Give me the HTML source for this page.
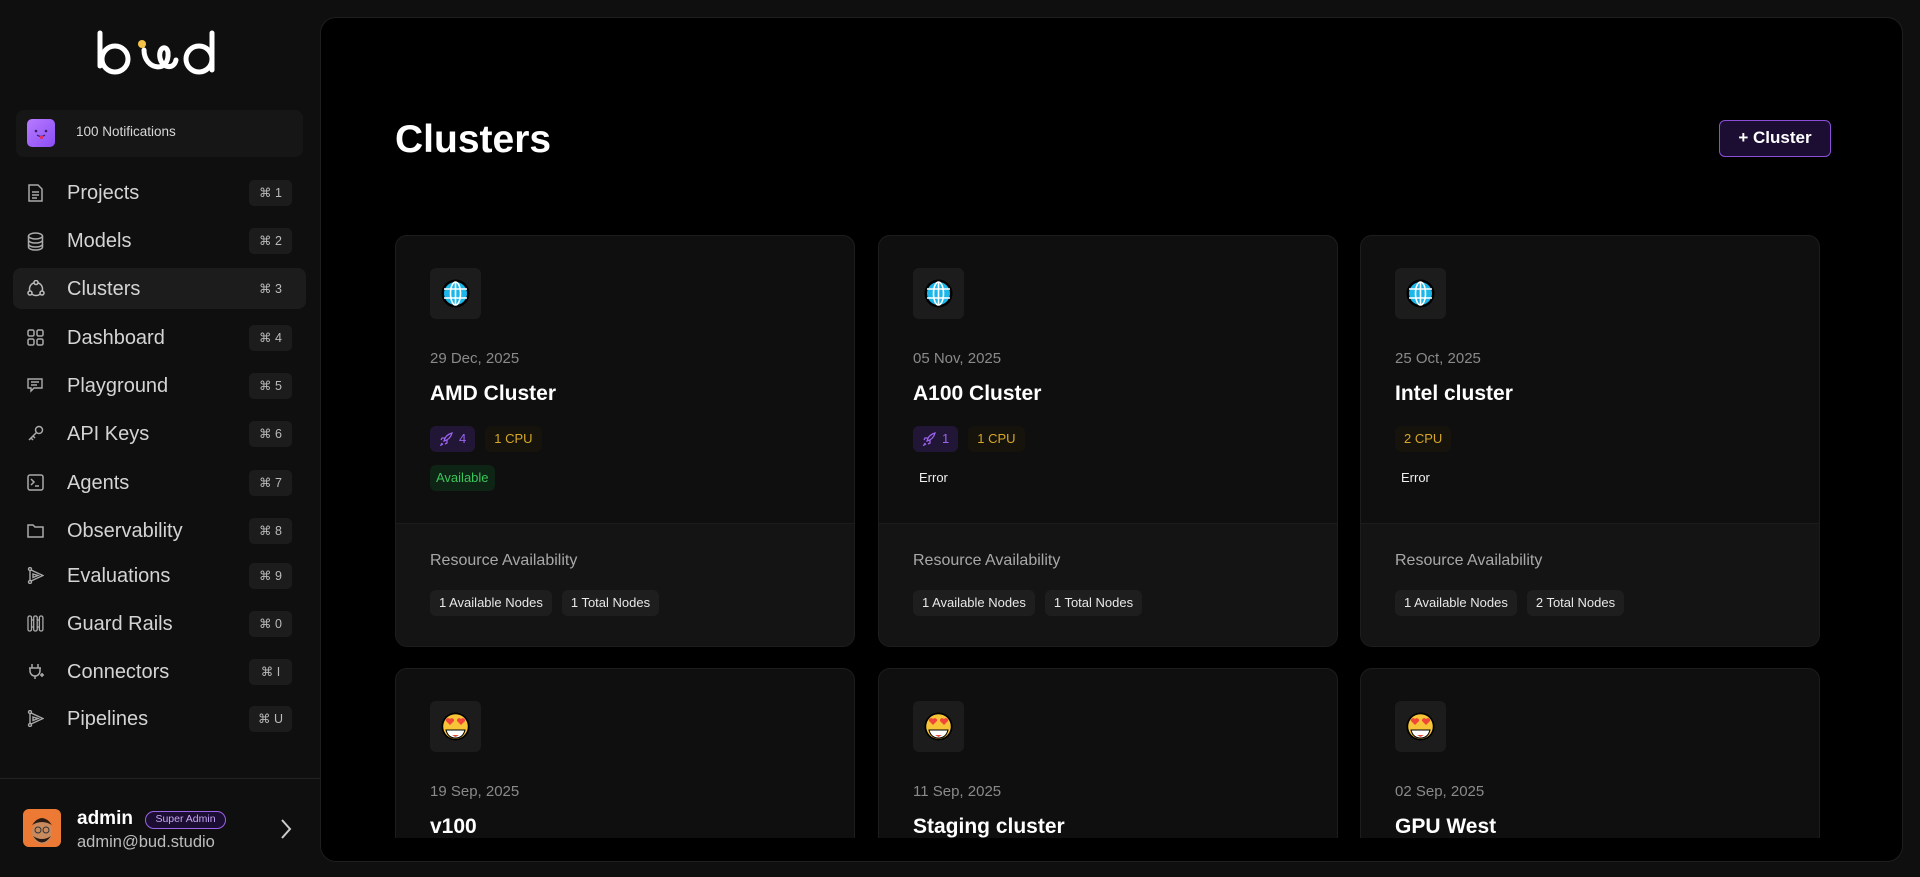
<!DOCTYPE html>
<html style="overflow:hidden"><head><meta charset="utf-8"><style>
*{box-sizing:border-box;margin:0;padding:0}
html,body{width:1920px;height:877px;overflow:hidden}
body{background:#0f0f0f;font-family:"Liberation Sans",sans-serif;color:#e8e8e8;position:relative}
.side{position:absolute;left:0;top:0;width:320px;height:877px;background:#0f0f0f}
.logo{position:absolute;left:96px;top:30px}
.notif{position:absolute;left:16px;top:110px;width:287px;height:47px;background:#161616;border-radius:8px}
.notif .ic{position:absolute;left:11px;top:9px;width:28px;height:28px;border-radius:5px;background:linear-gradient(135deg,#b67bff,#8c4df5)}
.notif span{position:absolute;left:60px;top:14px;font-size:13.5px;color:#d8d8d8}
.nav{position:absolute;left:13px;width:293px;height:41px;border-radius:8px}
.nav.act{background:#1c1c1c}
.nav svg{position:absolute;left:14px;top:12px}
.nav .t{position:absolute;left:54px;top:10px;font-size:20px;color:#d4d4d4}
.nav .k{position:absolute;left:236px;top:8px;width:43px;height:26px;background:#1c1c1c;border-radius:5px;font-size:12.5px;color:#bbb;text-align:center;line-height:26px}
.nav.act .k{background:none}
.sdiv{position:absolute;left:0;top:778px;width:320px;height:1px;background:#222}
.main{position:absolute;left:320px;top:17px;width:1583px;height:845px;background:#000;border:1px solid #1e1e1e;border-radius:16px;overflow:hidden}
.clip{position:absolute;left:0;top:0;width:1583px;height:820px;overflow:hidden}
h1{position:absolute;left:74px;top:100px;font-size:39px;font-weight:bold;color:#fff}
.btn{position:absolute;left:1398px;top:102px;width:112px;height:37px;border:1.5px solid #8a4fd6;background:#1c0d33;border-radius:6px;color:#fff;font-size:17px;font-weight:bold;text-align:center;line-height:34px}
.card{position:absolute;width:460px;height:412px;background:#0f0f0f;border:1px solid #1d1d1d;border-radius:12px;overflow:hidden}
.card .ib{position:absolute;left:34px;top:32px;width:51px;height:51px;background:#1c1c1c;border-radius:6px}
.card .ib svg{position:absolute;left:10px;top:10px}
.card .d{position:absolute;left:34px;top:114px;font-size:15px;color:#8a8a8a}
.card .n{position:absolute;left:34px;top:146px;font-size:21px;font-weight:bold;color:#fff}
.tags{position:absolute;left:34px;top:190px;display:flex;gap:10px}
.tag{height:26px;border-radius:6px;padding:0 9px;font-size:13px;line-height:26px}
.g{background:#221636;color:#9b63f0;display:flex;align-items:center;gap:6px}
.c{background:#16130c;color:#d6a729}
.st{position:absolute;left:34px;top:229px;height:26px;border-radius:6px;padding:0 6px;font-size:13px;line-height:26px}
.av{background:#0e2414;color:#3bc45a}
.er{color:#f0f0f0;padding:0 6px}
.bot{position:absolute;left:0;top:287px;width:460px;height:125px;background:#141414;border-top:1px solid #1c1c1c}
.bot .r{position:absolute;left:34px;top:28px;font-size:16px;color:#a8a8a8}
.bot .ch{position:absolute;left:34px;top:66px;display:flex;gap:10px}
.bot .ch div{height:26px;padding:0 9px;background:#1e1e1e;border-radius:6px;font-size:13px;line-height:26px;color:#e8e8e8}
</style></head><body>
<div class="side">
<svg class="logo" width="128" height="46" viewBox="0 0 128 46"><g fill="none" stroke="#fff" stroke-width="5" stroke-linecap="round"><path d="M4 3V36"/><circle cx="19" cy="29" r="13"/><path d="M48 20C48 40 74 44 72 22C70 14 62 18 64 28C66 38 78 40 80 30"/><circle cx="103" cy="29" r="13"/><path d="M116 3V40"/></g><circle cx="46" cy="14" r="4" fill="#f2c146"/></svg>
<div class="notif"><div class="ic"><svg width="28" height="28"><circle cx="9" cy="12" r="1.3" fill="#3b1f66"/><circle cx="19" cy="12" r="1.3" fill="#3b1f66"/><path d="M10 16Q14 19 18 16" stroke="#3b1f66" fill="none" stroke-width="1.2"/><path d="M13 17h3v3h-3z" fill="#e0306b"/></svg></div><span>100 Notifications</span></div>

<div class="nav" style="top:172px"><svg width="17" height="18" fill="none" stroke="#aaa" stroke-width="1.5"><path d="M2 1h9l4 4v12H2z"/><path d="M5 8h7M5 11h7M5 14h5"/></svg><span class="t">Projects</span><span class="k">⌘ 1</span></div>
<div class="nav" style="top:220px"><svg width="17" height="19" fill="none" stroke="#aaa" stroke-width="1.5"><ellipse cx="8.5" cy="4" rx="7" ry="3"/><path d="M1.5 4v11c0 1.7 3 3 7 3s7-1.3 7-3V4M1.5 8c0 1.7 3 3 7 3s7-1.3 7-3M1.5 12c0 1.7 3 3 7 3s7-1.3 7-3"/></svg><span class="t">Models</span><span class="k">⌘ 2</span></div>
<div class="nav act" style="top:268px"><svg width="18" height="18" fill="none" stroke="#bbb" stroke-width="1.5"><circle cx="9" cy="9" r="6.5"/><circle cx="9" cy="2.5" r="2" fill="#1c1c1c"/><circle cx="3" cy="13" r="2" fill="#1c1c1c"/><circle cx="15" cy="13" r="2" fill="#1c1c1c"/></svg><span class="t">Clusters</span><span class="k">⌘ 3</span></div>
<div class="nav" style="top:317px"><svg width="17" height="17" fill="none" stroke="#aaa" stroke-width="1.5"><rect x="1" y="1" width="6" height="6" rx="1.5"/><rect x="10" y="1" width="6" height="6" rx="1.5"/><rect x="1" y="10" width="6" height="6" rx="1.5"/><rect x="10" y="10" width="6" height="6" rx="1.5"/></svg><span class="t">Dashboard</span><span class="k">⌘ 4</span></div>
<div class="nav" style="top:365px"><svg width="17" height="17" fill="none" stroke="#aaa" stroke-width="1.4"><path d="M1 2h14v9H7l-3 3v-3H1z"/><path d="M4 5h8M4 8h6"/></svg><span class="t">Playground</span><span class="k">⌘ 5</span></div>
<div class="nav" style="top:413px"><svg width="17" height="17" fill="none" stroke="#aaa" stroke-width="1.5"><circle cx="12" cy="5" r="3.5"/><path d="M9.5 7.5L2 15M4 13l2 2M6 11l2 2"/></svg><span class="t">API Keys</span><span class="k">⌘ 6</span></div>
<div class="nav" style="top:462px"><svg width="17" height="17" fill="none" stroke="#aaa" stroke-width="1.5"><rect x="1" y="1" width="15" height="15" rx="2"/><path d="M4 5l3 3-3 3M8 12h4"/></svg><span class="t">Agents</span><span class="k">⌘ 7</span></div>
<div class="nav" style="top:510px"><svg width="17" height="17" fill="none" stroke="#aaa" stroke-width="1.5"><path d="M1 3h5l2 2h8v10H1z"/></svg><span class="t">Observability</span><span class="k">⌘ 8</span></div>
<div class="nav" style="top:555px"><svg width="17" height="17" fill="none" stroke="#aaa" stroke-width="1.4"><circle cx="3" cy="2" r="1.5"/><circle cx="3" cy="15" r="1.5"/><path d="M3 3.5v10M4 3l12 5.5L4 14M6 7l5 1.5-5 2z"/></svg><span class="t">Evaluations</span><span class="k">⌘ 9</span></div>
<div class="nav" style="top:603px"><svg width="17" height="17" fill="none" stroke="#aaa" stroke-width="1.3"><rect x="1" y="1" width="3.5" height="15" rx="1.5"/><rect x="6.7" y="1" width="3.5" height="15" rx="1.5"/><rect x="12.4" y="1" width="3.5" height="15" rx="1.5"/><path d="M4.5 5h2M4.5 12h2M10.2 5h2M10.2 12h2"/></svg><span class="t">Guard Rails</span><span class="k">⌘ 0</span></div>
<div class="nav" style="top:651px"><svg width="17" height="17" fill="none" stroke="#aaa" stroke-width="1.5"><path d="M5 1v4M11 1v4M2 5h12M3 5v3a5 5 0 0 0 10 0V5M8 13v3M13 12h4M15 10v4"/></svg><span class="t">Connectors</span><span class="k">⌘ I</span></div>
<div class="nav" style="top:698px"><svg width="17" height="17" fill="none" stroke="#aaa" stroke-width="1.4"><circle cx="3" cy="2" r="1.5"/><circle cx="3" cy="15" r="1.5"/><path d="M3 3.5v10M4 3l12 5.5L4 14M6 7l5 1.5-5 2z"/></svg><span class="t">Pipelines</span><span class="k">⌘ U</span></div>

<div class="sdiv"></div>
<div style="position:absolute;left:23px;top:809px;width:38px;height:38px;border-radius:6px;background:#ec7a34;overflow:hidden"><svg width="38" height="38"><ellipse cx="19" cy="23" rx="10" ry="12" fill="#c98a5e"/><path d="M9 16Q19 2 29 16Q19 10 9 16" fill="#2a1a12"/><path d="M10 27Q19 40 28 27Q19 33 10 27" fill="#2a1a12"/><circle cx="15" cy="21" r="3" fill="none" stroke="#333"/><circle cx="23" cy="21" r="3" fill="none" stroke="#333"/></svg></div>
<div style="position:absolute;left:77px;top:808px;font-size:19px;font-weight:bold;color:#fff">admin</div>
<div style="position:absolute;left:145px;top:811px;width:81px;height:18px;border:1.3px solid #9a63e8;border-radius:9px;background:#1c0d33;color:#c8a8f5;font-size:10.5px;text-align:center;line-height:15px">Super Admin</div>
<div style="position:absolute;left:77px;top:833px;font-size:16.5px;color:#bdbdbd">admin@bud.studio</div>
<svg style="position:absolute;left:280px;top:818px" width="12" height="22" fill="none" stroke="#ccc" stroke-width="2"><path d="M2 2l8 9-8 9"/></svg>
</div>

<div class="main"><div class="clip">
<h1>Clusters</h1>
<div class="btn">+ Cluster</div>

<div class="card" style="left:74px;top:217px"><div class="ib"><svg width="31" height="31"><circle cx="15.5" cy="15.5" r="14" fill="#000"/><circle cx="15.5" cy="15.5" r="11.5" fill="#1cb7ea"/><g stroke="#fff" stroke-width="1.6" fill="none"><ellipse cx="15.5" cy="15.5" rx="5" ry="11.5"/><path d="M15.5 4v23M4 11h23M4 20h23"/></g></svg></div>
<div class="d">29 Dec, 2025</div><div class="n">AMD Cluster</div>
<div class="tags"><div class="tag g"><svg width="14" height="14" fill="none" stroke="#9b63f0" stroke-width="1.3"><path d="M3 11l-1 2 2-1M5 9C6 5 9 2 13 1c-1 4-4 7-8 8zM6 6H3L2 8M8 8v3l-2 1"/></svg>4</div><div class="tag c">1 CPU</div></div>
<div class="st av">Available</div>
<div class="bot"><div class="r">Resource Availability</div><div class="ch"><div>1 Available Nodes</div><div>1 Total Nodes</div></div></div></div>

<div class="card" style="left:557px;top:217px"><div class="ib"><svg width="31" height="31"><circle cx="15.5" cy="15.5" r="14" fill="#000"/><circle cx="15.5" cy="15.5" r="11.5" fill="#1cb7ea"/><g stroke="#fff" stroke-width="1.6" fill="none"><ellipse cx="15.5" cy="15.5" rx="5" ry="11.5"/><path d="M15.5 4v23M4 11h23M4 20h23"/></g></svg></div>
<div class="d">05 Nov, 2025</div><div class="n">A100 Cluster</div>
<div class="tags"><div class="tag g"><svg width="14" height="14" fill="none" stroke="#9b63f0" stroke-width="1.3"><path d="M3 11l-1 2 2-1M5 9C6 5 9 2 13 1c-1 4-4 7-8 8zM6 6H3L2 8M8 8v3l-2 1"/></svg>1</div><div class="tag c">1 CPU</div></div>
<div class="st er">Error</div>
<div class="bot"><div class="r">Resource Availability</div><div class="ch"><div>1 Available Nodes</div><div>1 Total Nodes</div></div></div></div>

<div class="card" style="left:1039px;top:217px"><div class="ib"><svg width="31" height="31"><circle cx="15.5" cy="15.5" r="14" fill="#000"/><circle cx="15.5" cy="15.5" r="11.5" fill="#1cb7ea"/><g stroke="#fff" stroke-width="1.6" fill="none"><ellipse cx="15.5" cy="15.5" rx="5" ry="11.5"/><path d="M15.5 4v23M4 11h23M4 20h23"/></g></svg></div>
<div class="d">25 Oct, 2025</div><div class="n">Intel cluster</div>
<div class="tags"><div class="tag c">2 CPU</div></div>
<div class="st er">Error</div>
<div class="bot"><div class="r">Resource Availability</div><div class="ch"><div>1 Available Nodes</div><div>2 Total Nodes</div></div></div></div>

<div class="card" style="left:74px;top:650px"><div class="ib"><svg width="31" height="31"><circle cx="15.5" cy="15.5" r="14" fill="#000"/><circle cx="15.5" cy="15.5" r="12.3" fill="#f7c438"/><path d="M6 19h19q-2 8-9.5 8T6 19z" fill="#fff" stroke="#000"/><path d="M12 24h7l-3.5 2z" fill="#e84a3a"/><path d="M10 14l-4-4a2.3 2.3 0 0 1 4-2 2.3 2.3 0 0 1 4 2zM21 14l-4-4a2.3 2.3 0 0 1 4-2 2.3 2.3 0 0 1 4 2z" fill="#f0463a"/></svg></div>
<div class="d">19 Sep, 2025</div><div class="n">v100</div></div>
<div class="card" style="left:557px;top:650px"><div class="ib"><svg width="31" height="31"><circle cx="15.5" cy="15.5" r="14" fill="#000"/><circle cx="15.5" cy="15.5" r="12.3" fill="#f7c438"/><path d="M6 19h19q-2 8-9.5 8T6 19z" fill="#fff" stroke="#000"/><path d="M12 24h7l-3.5 2z" fill="#e84a3a"/><path d="M10 14l-4-4a2.3 2.3 0 0 1 4-2 2.3 2.3 0 0 1 4 2zM21 14l-4-4a2.3 2.3 0 0 1 4-2 2.3 2.3 0 0 1 4 2z" fill="#f0463a"/></svg></div>
<div class="d">11 Sep, 2025</div><div class="n">Staging cluster</div></div>
<div class="card" style="left:1039px;top:650px"><div class="ib"><svg width="31" height="31"><circle cx="15.5" cy="15.5" r="14" fill="#000"/><circle cx="15.5" cy="15.5" r="12.3" fill="#f7c438"/><path d="M6 19h19q-2 8-9.5 8T6 19z" fill="#fff" stroke="#000"/><path d="M12 24h7l-3.5 2z" fill="#e84a3a"/><path d="M10 14l-4-4a2.3 2.3 0 0 1 4-2 2.3 2.3 0 0 1 4 2zM21 14l-4-4a2.3 2.3 0 0 1 4-2 2.3 2.3 0 0 1 4 2z" fill="#f0463a"/></svg></div>
<div class="d">02 Sep, 2025</div><div class="n">GPU West</div></div>
</div></div>
</body></html>
